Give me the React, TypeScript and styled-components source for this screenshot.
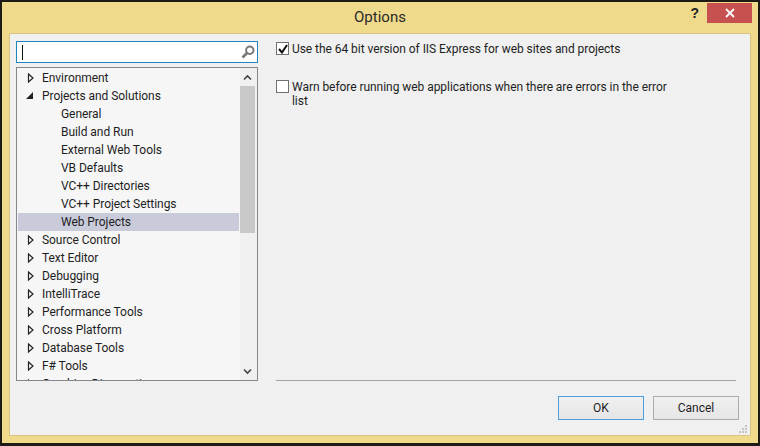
import styled, { createGlobalStyle } from "styled-components";

const GlobalStyle = createGlobalStyle`
  html, body {
    margin: 0;
    padding: 0;
    background: #1e1a14;
  }
  body {
    font-family: Roboto, "Noto Sans", "Liberation Sans", sans-serif;
  }
`;
const Frame = styled.div`
  width: 756px;
  height: 441px;
  margin: 2px 2px 3px 2px;
  background: #efd98a;
  display: flex;
  flex-direction: column;
  padding: 0 7px 7px 7px;
  box-sizing: border-box;
`;
const TitleBar = styled.div`
  position: relative;
  height: 31px;
  flex: none;
  display: flex;
  align-items: center;
  justify-content: center;
  font-size: 15px;
  padding-bottom: 2px;
  box-sizing: border-box;
  color: #2a2a2a;
`;
const HelpBtn = styled.div`
  position: absolute;
  right: 52px;
  top: 3px;
  font: bold 14px "Liberation Sans", sans-serif;
  color: #222;
`;
const CloseBtn = styled.div`
  position: absolute;
  right: -1px;
  top: 1px;
  width: 45px;
  height: 20px;
  background: #c75050;
  display: flex;
  align-items: center;
  justify-content: center;
`;
const Panel = styled.div`
  position: relative;
  flex: 1;
  min-height: 0;
  background: #f0f0f0;
  border: 1px solid #d8c47e;
  display: grid;
  grid-template-columns: 242px 1fr;
  grid-template-rows: auto 1fr;
  column-gap: 18px;
  padding: 7px 14px 0 6px;
  box-sizing: border-box;
`;
const LeftCol = styled.div`
  display: flex;
  flex-direction: column;
  gap: 4px;
  height: 340px;
`;
const Search = styled.div`
  height: 22px;
  flex: none;
  box-sizing: border-box;
  background: #fff;
  border: 1px solid #1f86bd;
  display: flex;
  align-items: center;
  justify-content: space-between;
  padding: 0 2px 0 5px;
`;
const Caret = styled.span`
  width: 1px;
  height: 15px;
  background: #111;
`;
const Tree = styled.div`
  flex: 1;
  min-height: 0;
  display: flex;
  background: #f6f6f6;
  border: 1px solid #85878c;
  overflow: hidden;
`;
const Rows = styled.div`
  flex: 1;
  padding: 1px 1px 0 1px;
  overflow: hidden;
  min-width: 0;
`;
const Row = styled.div<{ $child?: boolean; $selected?: boolean }>`
  height: 18px;
  display: flex;
  align-items: center;
  padding-left: ${(p) => (p.$child ? "43px" : "8px")};
  background: ${(p) => (p.$selected ? "#c9cbdb" : "transparent")};
  font-size: 12px;
  letter-spacing: -0.05px;
  color: #1e1e1e;
  white-space: nowrap;
`;
const Arrow = styled.svg`
  width: 9px;
  height: 10px;
  flex: none;
  margin-right: 7px;
`;
const ScrollBar = styled.div`
  width: 17px;
  flex: none;
  background: #f0f0f0;
  display: flex;
  flex-direction: column;
  align-items: center;
  padding-right: 2px;
  box-sizing: border-box;
`;
const ScrollBtn = styled.div`
  height: 18px;
  flex: none;
  display: flex;
  align-items: center;
  justify-content: center;
`;
const Thumb = styled.div`
  width: 15px;
  height: 147px;
  flex: none;
  background: #c8c8c8;
`;
const Spacer = styled.div`
  flex: 1;
`;
const RightCol = styled.div`
  padding-top: 1px;
  display: flex;
  flex-direction: column;
  gap: 24px;
`;
const Option = styled.label`
  display: flex;
  align-items: flex-start;
  gap: 3px;
  width: 396px;
  font-size: 12px;
  line-height: 14px;
  letter-spacing: -0.05px;
  color: #1e1e1e;
`;
const CheckBox = styled.span`
  width: 11px;
  height: 11px;
  flex: none;
  background: #fff;
  border: 1px solid #707070;
  display: flex;
  align-items: center;
  justify-content: center;
`;
const Footer = styled.div`
  grid-column: 2;
  margin-top: -1px;
  border-top: 1px solid #a3a3a3;
  display: flex;
  justify-content: flex-end;
  gap: 9px;
  padding-top: 15px;
`;
const Button = styled.button<{ $primary?: boolean }>`
  width: 86px;
  height: 24px;
  margin-right: ${(p) => (p.$primary ? "0" : "-3px")};
  padding: 0;
  font-family: inherit;
  font-size: 12px;
  color: #1e1e1e;
  border: 1px solid ${(p) => (p.$primary ? "#4a9fe0" : "#acacac")};
  background: linear-gradient(#f0f0f0, #e5e5e5);
`;
const Grip = styled.svg`
  position: absolute;
  right: 2px;
  bottom: 1px;
  width: 10px;
  height: 10px;
`;

const RightArrow = () => (
  <Arrow viewBox="0 0 9 10">
    <path d="M2.5 1 L7 5 L2.5 9 Z" fill="#f6f6f6" stroke="#222" strokeWidth="1.2" />
  </Arrow>
);
const DownArrow = () => (
  <Arrow viewBox="0 0 9 10">
    <path d="M0 8 H7 V1 Z" fill="#222" />
  </Arrow>
);

const items = [
  { label: "Environment", type: "closed" },
  { label: "Projects and Solutions", type: "open" },
  { label: "General", type: "child" },
  { label: "Build and Run", type: "child" },
  { label: "External Web Tools", type: "child" },
  { label: "VB Defaults", type: "child" },
  { label: "VC++ Directories", type: "child" },
  { label: "VC++ Project Settings", type: "child" },
  { label: "Web Projects", type: "child", selected: true },
  { label: "Source Control", type: "closed" },
  { label: "Text Editor", type: "closed" },
  { label: "Debugging", type: "closed" },
  { label: "IntelliTrace", type: "closed" },
  { label: "Performance Tools", type: "closed" },
  { label: "Cross Platform", type: "closed" },
  { label: "Database Tools", type: "closed" },
  { label: "F# Tools", type: "closed" },
  { label: "Graphics Diagnostics", type: "closed" },
];

const App = () => {
  return (
    <>
      <GlobalStyle />
      <Frame>
        <TitleBar>
          Options
          <HelpBtn>?</HelpBtn>
          <CloseBtn>
            <svg width="10" height="10" viewBox="0 0 10 10">
              <path d="M1 1 L9 9 M9 1 L1 9" stroke="#fff" strokeWidth="1.8" />
            </svg>
          </CloseBtn>
        </TitleBar>
        <Panel>
          <LeftCol>
            <Search>
              <Caret />
              <svg width="14" height="14" viewBox="0 0 14 14">
                <circle cx="8.8" cy="5.2" r="3.7" fill="none" stroke="#777" strokeWidth="2" />
                <path d="M6 8 L1.5 12.5" stroke="#777" strokeWidth="2.6" />
              </svg>
            </Search>
            <Tree>
              <Rows>
                {items.map((item) => (
                  <Row key={item.label} $child={item.type === "child"} $selected={item.selected}>
                    {item.type === "closed" && <RightArrow />}
                    {item.type === "open" && <DownArrow />}
                    {item.label}
                  </Row>
                ))}
              </Rows>
              <ScrollBar>
                <ScrollBtn>
                  <svg width="9" height="7" viewBox="0 0 9 7">
                    <path d="M1 5.5 L4.5 2 L8 5.5" fill="none" stroke="#444" strokeWidth="1.6" />
                  </svg>
                </ScrollBtn>
                <Thumb />
                <Spacer />
                <ScrollBtn>
                  <svg width="9" height="7" viewBox="0 0 9 7">
                    <path d="M1 1.5 L4.5 5 L8 1.5" fill="none" stroke="#444" strokeWidth="1.6" />
                  </svg>
                </ScrollBtn>
              </ScrollBar>
            </Tree>
          </LeftCol>
          <RightCol>
            <Option>
              <CheckBox>
                <svg width="10" height="10" viewBox="0 0 10 10">
                  <path d="M1 5 L4 8.5 L9 1" fill="none" stroke="#111" strokeWidth="2" />
                </svg>
              </CheckBox>
              Use the 64 bit version of IIS Express for web sites and projects
            </Option>
            <Option>
              <CheckBox />
              Warn before running web applications when there are errors in the error list
            </Option>
          </RightCol>
          <Footer>
            <Button $primary>OK</Button>
            <Button>Cancel</Button>
          </Footer>
          <Grip viewBox="0 0 10 10">
            <path d="M7 1h2v2H7zM4 4h2v2H4zM7 4h2v2H7zM1 7h2v2H1zM4 7h2v2H4zM7 7h2v2H7z" fill="#c4c4c4" />
          </Grip>
        </Panel>
      </Frame>
    </>
  );
};

export default App;
